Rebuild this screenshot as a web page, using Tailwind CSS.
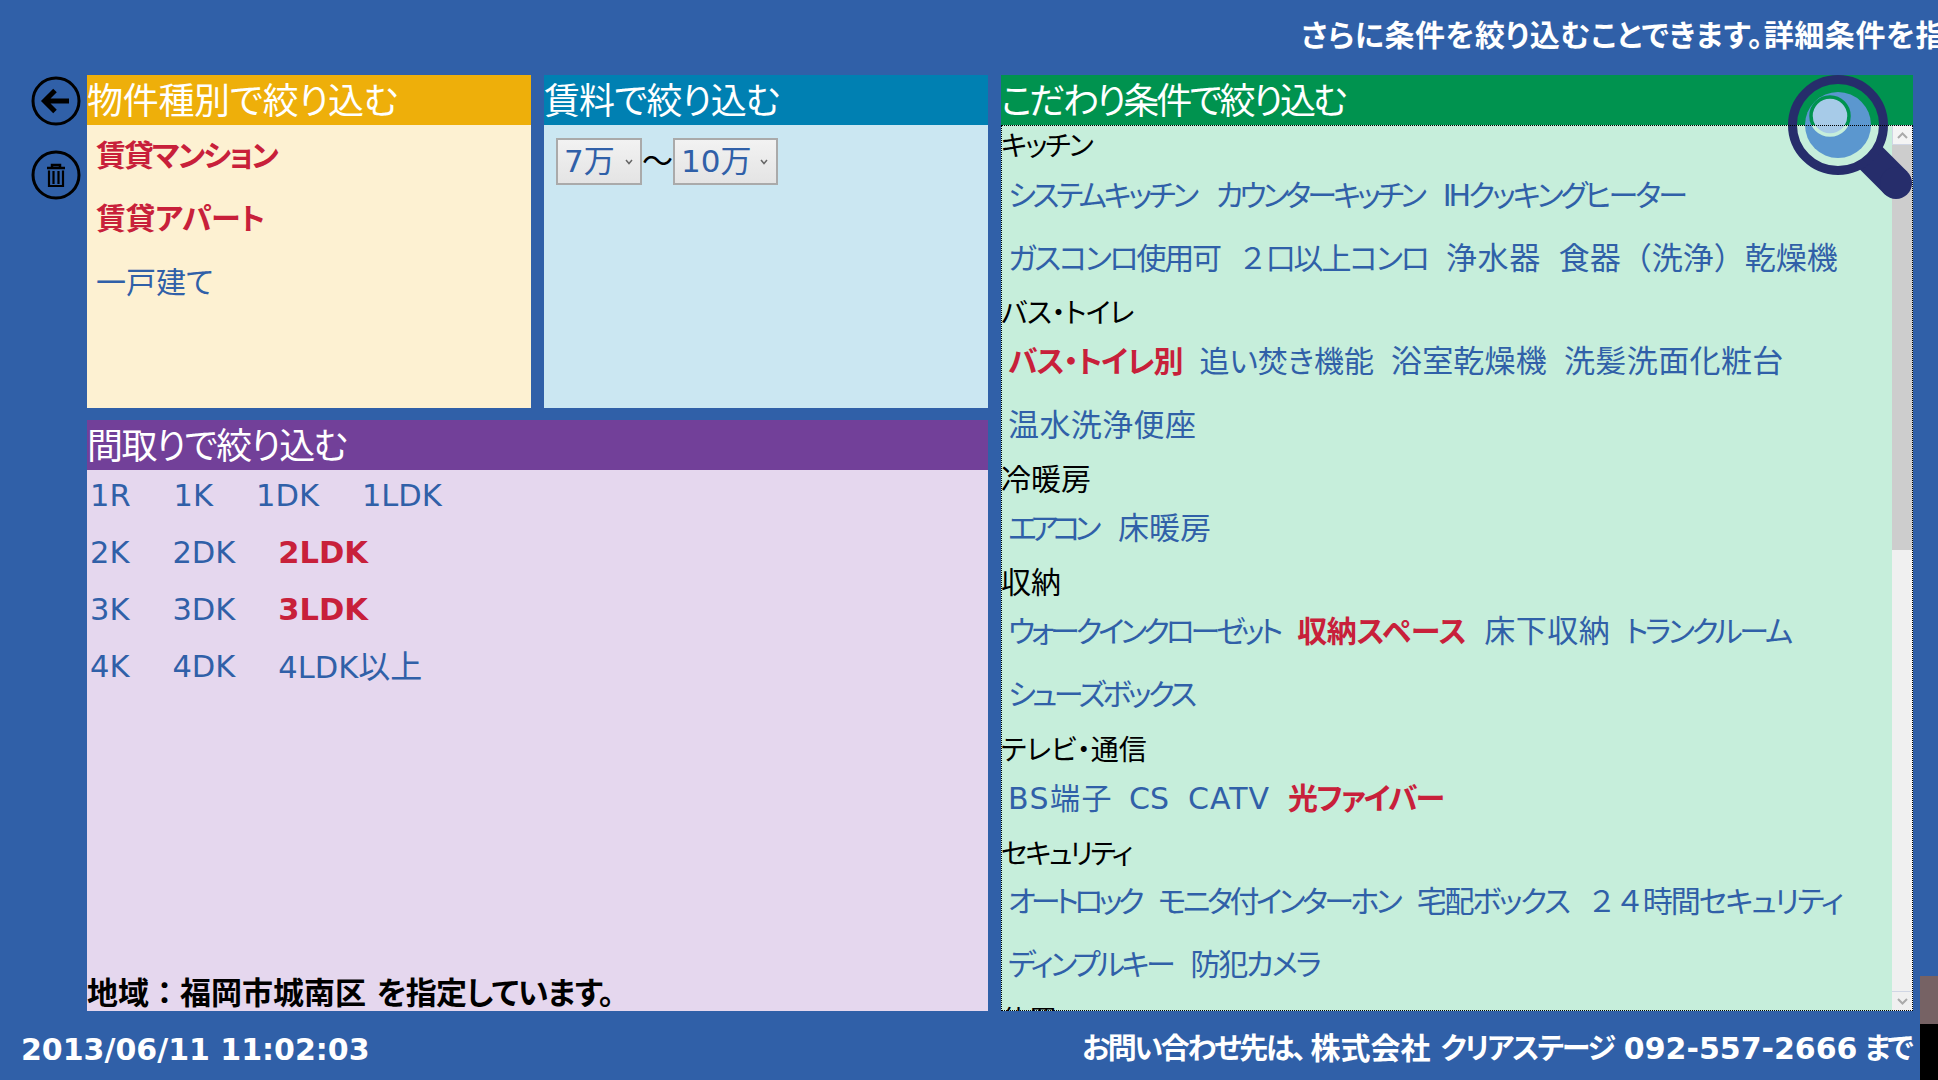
<!DOCTYPE html>
<html lang="ja">
<head>
    <meta charset="UTF-8">
    <title>条件で絞り込む</title>
    <script src="https://cdn.jsdelivr.net/npm/@tailwindcss/browser@4"></script>
</head>
<body class="w-[1938px] h-[1080px] overflow-hidden relative flex flex-col bg-[#3060a8] text-[#3060a8] whitespace-nowrap [font-family:'DejaVu_Sans','Noto_Sans_CJK_JP',sans-serif] [font-feature-settings:'palt']">
    <!-- top message -->
    <div class="h-[75px] shrink-0 pl-[1301px] pb-[4px] flex items-center overflow-hidden text-white font-bold text-[30px] tracking-[0.6px]">さらに条件を絞り込むことできます。詳細条件を指定してください。</div>

    <div class="h-[936px] shrink-0 flex">
        <!-- side buttons -->
        <div class="w-[87px] shrink-0 flex flex-col pl-[31px] pt-[1px] gap-[24px]">
            <svg width="50" height="50" viewBox="0 0 50 50" fill="none" stroke="#000">
                <circle cx="25" cy="25" r="23" stroke-width="3"/>
                <path d="M38 25H14M24 14.500 13.500 25 24 35.500" stroke-width="5"/>
            </svg>
            <svg width="50" height="50" viewBox="0 0 50 50" fill="none" stroke="#000">
                <circle cx="25" cy="25" r="23" stroke-width="3"/>
                <path d="M16 18H34M21 18V15H29V18" stroke-width="2.500"/>
                <path d="M18 20.500V36H32V20.500M22.500 21V34M27.500 21V34" stroke-width="2.200"/>
            </svg>
        </div>

        <!-- left column -->
        <div class="w-[901px] shrink-0 flex flex-col gap-[12px]">
            <div class="h-[333px] shrink-0 flex gap-[13px]">
                <section class="w-[444px] flex flex-col bg-[#fdf1d2]">
                    <h2 class="h-[50px] pt-[3px] shrink-0 flex items-center bg-[#eeaf0a] text-white text-[36px] tracking-[-0.3px]">物件種別で絞り込む</h2>
                    <div class="pl-[9px] text-[30px]">
                        <div class="h-[63px] pb-[2px] flex items-center font-bold text-[#c8203a] tracking-[-2px]">賃貸マンション</div>
                        <div class="h-[63px] pb-[2px] flex items-center font-bold text-[#c8203a] tracking-[-0.4px]">賃貸アパート</div>
                        <div class="h-[63px] flex items-center">一戸建て</div>
                    </div>
                </section>
                <section class="w-[444px] flex flex-col bg-[#cbe7f2]">
                    <h2 class="h-[50px] pt-[3px] shrink-0 flex items-center bg-[#0080b2] text-white text-[36px] tracking-[-0.9px]">賃料で絞り込む</h2>
                    <div class="pl-[12px] pt-[13px] flex items-center text-[31px]">
                        <div class="w-[86px] h-[47px] flex items-center justify-between pl-[6px] pr-[7px] border-2 border-[#aaaaaa] bg-gradient-to-b from-[#f2f2f2] to-[#e4e4e4]">
                            <span>7万</span>
                            <svg width="8" height="6" viewBox="0 0 8 6" fill="none" stroke="#666" stroke-width="1.500"><path d="M1 1l3 3.500L7 1"/></svg>
                        </div>
                        <span class="w-[31px] text-center text-black">〜</span>
                        <div class="w-[105px] h-[47px] flex items-center justify-between pl-[6px] pr-[8px] border-2 border-[#aaaaaa] bg-gradient-to-b from-[#f2f2f2] to-[#e4e4e4]">
                            <span>10万</span>
                            <svg width="8" height="6" viewBox="0 0 8 6" fill="none" stroke="#666" stroke-width="1.500"><path d="M1 1l3 3.500L7 1"/></svg>
                        </div>
                    </div>
                </section>
            </div>
            <section class="flex-1 flex flex-col bg-[#e5d7ee]">
                <h2 class="h-[50px] pt-[3px] shrink-0 flex items-center bg-[#724099] text-white text-[36px] tracking-[-1.5px]">間取りで絞り込む</h2>
                <div class="pl-[3px] text-[30.500px]">
                    <div class="h-[57px] pb-[6px] flex items-center gap-[43px]"><span>1R</span><span>1K</span><span>1DK</span><span>1LDK</span></div>
                    <div class="h-[57px] pb-[6px] flex items-center gap-[43px]"><span>2K</span><span>2DK</span><span class="font-bold text-[#c8203a]">2LDK</span></div>
                    <div class="h-[57px] pb-[6px] flex items-center gap-[43px]"><span>3K</span><span>3DK</span><span class="font-bold text-[#c8203a]">3LDK</span></div>
                    <div class="h-[57px] pb-[6px] flex items-center gap-[43px]"><span>4K</span><span>4DK</span><span>4LDK<span class="text-[32px]">以上</span></span></div>
                </div>
                <div class="mt-auto font-bold text-[31px] leading-[36px] text-black"><span class="[font-feature-settings:normal]">地域：福岡市城南区</span> <span class="tracking-[-0.8px]">を指定しています。</span></div>
            </section>
        </div>

        <!-- right panel -->
        <section class="w-[912px] ml-[13px] shrink-0 relative flex flex-col">
            <h2 class="h-[50px] pt-[3px] shrink-0 flex items-center bg-[#00934f] text-white text-[36px] tracking-[-2.900px]">こだわり条件で絞り込む</h2>
            <div class="flex-1 min-h-0 flex bg-[#c6eedb]">
                <div class="flex-1 min-w-0 overflow-hidden">
                    <div class="h-[41px] pt-[3px] flex items-center text-[28px] text-black tracking-[-2px]">キッチン</div>
                    <div class="h-[63px] pb-[4px] pl-[7px] flex items-center gap-[20px] text-[30px]"><span class="tracking-[-3.400px]">システムキッチン</span><span class="tracking-[-4px]">カウンターキッチン</span><span class="tracking-[-3px]">IHクッキングヒーター</span></div>
                    <div class="h-[63px] pb-[4px] pl-[7px] flex items-center gap-[18px] text-[30px]"><span class="tracking-[-2.300px]">ガスコンロ使用可</span><span class="tracking-[-2px]"><span class="[font-feature-settings:normal]">２</span>口以上コンロ</span><span class="text-[31px] tracking-[0.6px]">浄水器</span><span class="text-[31px] [font-feature-settings:normal]">食器（洗浄）乾燥機</span></div>
                    <div class="h-[41px] pt-[2px] flex items-center text-[28px] text-black tracking-[-0.6px]">バス・トイレ</div>
                    <div class="h-[63px] pb-[6px] pl-[7px] flex items-center gap-[17px] text-[30px]"><span class="font-bold text-[#c8203a] tracking-[-1.200px]">バス・トイレ別</span><span>追い焚き機能</span><span class="text-[31px] tracking-[0.2px]">浴室乾燥機</span><span class="text-[31px] tracking-[0.4px]">洗髪洗面化粧台</span></div>
                    <div class="h-[63px] pb-[5px] pl-[7px] flex items-center gap-[18px] text-[30px]"><span class="text-[31px] tracking-[0.4px]">温水洗浄便座</span></div>
                    <div class="h-[41px] flex items-center text-[30px] text-black">冷暖房</div>
                    <div class="h-[63px] pb-[6px] pl-[7px] flex items-center gap-[18px] text-[30px]"><span class="tracking-[-6.200px]">エアコン</span><span class="text-[31px] ml-[5px]">床暖房</span></div>
                    <div class="h-[41px] pb-[2px] flex items-center text-[30px] text-black">収納</div>
                    <div class="h-[63px] pb-[8px] pl-[7px] flex items-center gap-[18px] text-[30px]"><span class="tracking-[-4.200px]">ウォークインクローゼット</span><span class="font-bold text-[#c8203a] tracking-[-0.4px]">収納スペース</span><span class="text-[31px] tracking-[0.5px]">床下収納</span><span class="tracking-[-3.100px] -ml-[3px]">トランクルーム</span></div>
                    <div class="h-[63px] pb-[8px] pl-[7px] flex items-center gap-[18px] text-[30px]"><span class="tracking-[-3.600px]">シューズボックス</span></div>
                    <div class="h-[41px] flex items-center text-[28px] text-black">テレビ・通信</div>
                    <div class="h-[63px] pb-[9px] pl-[7px] flex items-center gap-[16px] text-[30px]"><span class="tracking-[1.500px]">BS端子</span><span>CS</span><span class="tracking-[1px] ml-[3px]">CATV</span><span class="font-bold text-[#c8203a] tracking-[-1.800px] ml-[2px]">光ファイバー</span></div>
                    <div class="h-[41px] flex items-center text-[28px] text-black tracking-[-2.500px]">セキュリティ</div>
                    <div class="h-[63px] pb-[10px] pl-[7px] flex items-center gap-[18px] text-[30px]"><span class="tracking-[-4.700px]">オートロック</span><span class="tracking-[-3.600px]">モニタ付インターホン</span><span class="tracking-[-2.300px]">宅配ボックス</span><span class="tracking-[-2px]"><span class="[font-feature-settings:normal]">２４</span>時間セキュリティ</span></div>
                    <div class="h-[63px] pb-[10px] pl-[7px] flex items-center gap-[18px] text-[30px]"><span class="tracking-[-3.400px]">ディンプルキー</span><span class="tracking-[-2.200px]">防犯カメラ</span></div>
                    <div class="h-[41px] flex items-center text-[28px] text-black">位置</div>
                </div>
                <!-- scrollbar -->
                <div class="w-[21px] shrink-0 flex flex-col bg-[#f0f0f0]">
                    <div class="h-[20px] shrink-0 flex items-center justify-center bg-[#f4f4f4] border border-[#d0d6e4]">
                        <svg width="11" height="7" viewBox="0 0 11 7" fill="none" stroke="#aaa" stroke-width="2"><path d="M1 6l4.500-4.500L10 6"/></svg>
                    </div>
                    <div class="h-[405px] shrink-0 bg-[#cdcdcd]"></div>
                    <div class="flex-1"></div>
                    <div class="h-[20px] shrink-0 flex items-center justify-center border-t border-[#d0d6e4]">
                        <svg width="11" height="7" viewBox="0 0 11 7" fill="none" stroke="#aaa" stroke-width="2"><path d="M1 1l4.500 4.500L10 1"/></svg>
                    </div>
                </div>
            </div>
            <!-- magnifier over the header -->
            <svg class="absolute left-[786px] top-0" width="126" height="126" viewBox="0 0 126 126">
                <defs>
                    <clipPath id="upper"><rect x="0" y="0" width="126" height="50"/></clipPath>
                    <clipPath id="lower"><rect x="0" y="50" width="126" height="76"/></clipPath>
                </defs>
                <path d="M83 82 109 108" stroke="#262d6b" stroke-width="32"/>
                <circle cx="109" cy="108" r="16" fill="#262d6b"/>
                <circle cx="51" cy="50" r="45.500" fill="none" stroke="#262d6b" stroke-width="9"/>
                <circle cx="51" cy="50" r="33" fill="#5b97cf"/>
                <circle cx="43" cy="41" r="19" fill="#a7cbe8"/>
                <circle cx="43" cy="41" r="19" fill="none" stroke="#00934f" stroke-width="3.500" clip-path="url(#upper)"/>
                <circle cx="43" cy="41" r="19" fill="none" stroke="#c6eedb" stroke-width="3.500" clip-path="url(#lower)"/>
            </svg>
            <div class="absolute inset-x-0 top-[50px] bottom-0 border border-dotted border-black pointer-events-none"></div>
        </section>
    </div>

    <!-- footer -->
    <div class="flex-1 flex items-center justify-between pl-[21px] pr-[28px] pt-[7px] text-white font-bold">
        <span class="text-[30px]">2013/06/11 11:02:03</span>
        <span class="text-[29px]"><span class="tracking-[-2.300px]">お問い合わせ先は、</span><span class="text-[30px] ml-[6px]">株式会社</span> <span class="tracking-[-2.100px]">クリアステージ</span> <span class="text-[30px]">092-557-2666</span> <span class="tracking-[-3.500px] -ml-[3px]">まで</span></span>
    </div>

    <!-- window peeking in at the right edge -->
    <div class="absolute right-0 top-[976px] w-[18px] h-[104px] flex flex-col">
        <div class="h-[48px] bg-[#766264]"></div>
        <div class="flex-1 bg-black"></div>
    </div>
</body>
</html>
